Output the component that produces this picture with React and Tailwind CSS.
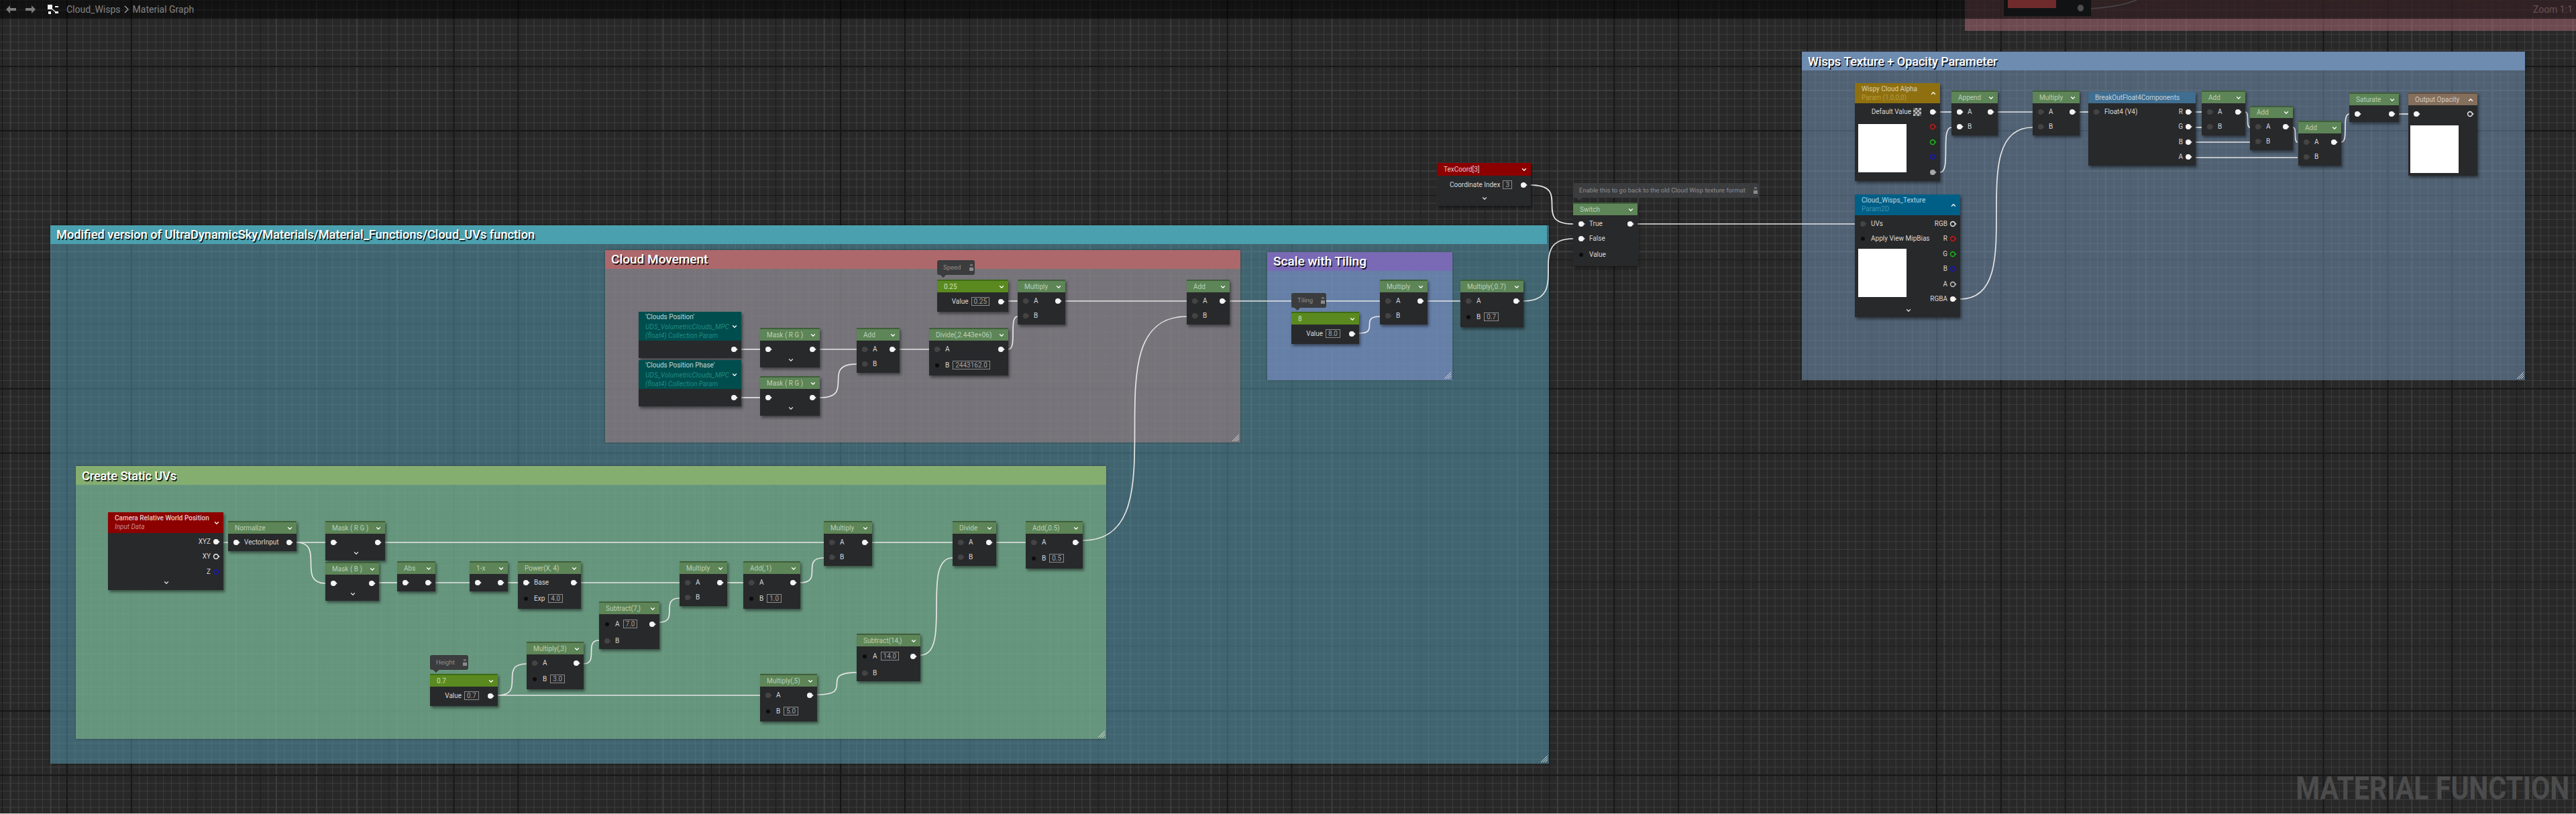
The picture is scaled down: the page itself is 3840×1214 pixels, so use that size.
import React from "react";
import { ChevronDown, ChevronUp } from "lucide-react";

const GREEN = "bg-[#5d8557] border-t-2 border-[#3f5e3a] text-[#bccfb5]";
const CONST = "bg-[#5a8a1f] border-t-2 border-[#3f6a14] text-[#cfe0b8]";
const RED = "bg-[#8c0000] text-[#e6c8c8]";
const TEAL = "bg-[#004d4d] text-[#c4d8d6]";
const GOLD = "bg-[#8f7010] text-[#d8ceb0]";
const BLUE = "bg-[#005f87] text-[#bcd6e2]";
const BREAK = "bg-[#3f6e91] text-[#c2d2dd]";
const BROWN = "bg-[#846e5c] border-t-2 border-[#5e4f42] text-[#d3cac2]";

const wires = [
  // cloud movement
  [1105, 521, 1133, 521],
  [1105, 593, 1133, 593],
  [1222, 521, 1277, 521],
  [1222, 593, 1277, 543],
  [1341, 521, 1385, 521],
  [1503, 521, 1517, 472],
  [1503, 449, 1517, 449],
  [1588, 449, 1769, 449],
  [1614, 806, 1769, 472],
  [1833, 449, 2057, 449],
  // scale with tiling
  [2026, 497, 2057, 472],
  [2128, 449, 2177, 449],
  [2271, 449, 2345, 356],
  [2282, 276, 2345, 334],
  [2441, 334, 2765, 334],
  // static uvs
  [333, 809, 340, 809],
  [442, 809, 485, 809],
  [442, 809, 485, 870],
  [574, 809, 1228, 809],
  [565, 869, 592, 869],
  [649, 869, 700, 869],
  [757, 869, 772, 869],
  [866, 869, 1013, 869],
  [1084, 869, 1108, 869],
  [1193, 869, 1228, 832],
  [1300, 809, 1420, 809],
  [1485, 809, 1529, 809],
  [742, 1037, 785, 990],
  [742, 1037, 1133, 1037],
  [870, 990, 893, 955],
  [983, 928, 1013, 892],
  [1218, 1036, 1277, 1003],
  [1372, 977, 1420, 832],
  // wisps
  [2892, 167, 2909, 167],
  [2892, 257, 2909, 190],
  [2978, 167, 3030, 167],
  [2922, 446, 3030, 190],
  [3100, 167, 3113, 167],
  [3273, 167, 3282, 167],
  [3273, 190, 3282, 190],
  [3273, 212, 3354, 212],
  [3273, 235, 3425, 235],
  [3347, 167, 3354, 190],
  [3418, 190, 3425, 212],
  [3490, 212, 3502, 170],
  [3576, 170, 3590, 170],
];

const Pin = ({ kind, color = "#e8e8e8" }) => {
  if (kind === "dot") {
    return (
      <svg width="11" height="10" className="shrink-0">
        <circle cx="5" cy="5" r="3" fill="#0c0c0c" />
      </svg>
    );
  }
  const fill = kind === "on" ? "#f4f4f4" : kind === "off" ? "#444444" : kind === "fill" ? color : "none";
  const stroke = kind === "ring" ? color : fill;
  return (
    <svg width="11" height="10" className="shrink-0">
      <path d="M8.5 3.2 L10.8 5 L8.5 6.8 Z" fill={kind === "ring" ? color : fill} />
      <circle cx="5" cy="5" r={kind === "ring" ? 3.4 : 4} fill={fill} stroke={stroke} strokeWidth={kind === "ring" ? 1.6 : 0} />
    </svg>
  );
};

const ValueBox = ({ children }) => (
  <span className="border border-[#8c8c8c] text-[#a2a2a2] px-[3px] h-[14px] leading-[12px] shrink-0">{children}</span>
);

const Checker = () => (
  <span className="w-[12px] h-[12px] mr-[12px] shrink-0 bg-[repeating-conic-gradient(#b5b5b5_0_25%,#5a5a5a_0_50%)] bg-[size:6px_6px]" />
);

const PinRow = ({ row }) => (
  <div className={`flex items-center ${row.h || "h-[22.5px]"}`}>
    {row.l && <Pin kind={row.l} />}
    {row.a && <span className="ml-[6px] text-[#d8d8d8] whitespace-nowrap">{row.a}</span>}
    {row.box && <span className="ml-[5px]"><ValueBox>{row.box}</ValueBox></span>}
    <div className="grow" />
    {row.ra && <span className="mr-[3px] text-[#d8d8d8] whitespace-nowrap">{row.ra}</span>}
    {row.rbox && <span className="mr-[12px] ml-[1px]"><ValueBox>{row.rbox}</ValueBox></span>}
    {row.check && <Checker />}
    {row.r && <Pin kind={row.r} color={row.c} />}
  </div>
);

const Node = ({ className, head = GREEN, title, sub, arrow = "down", rows = [], foot, thumb, headH = "h-[19px]", titleClass = "" }) => (
  <div className={`absolute flex flex-col bg-[#28292b] shadow-[2px_3px_4px_rgba(0,0,0,0.45)] text-[10px] leading-none ${className}`}>
    <div className={`flex items-center justify-between pl-[10px] pr-[5px] shrink-0 ${headH} ${head}`}>
      <div className="flex flex-col gap-[3px] min-w-0">
        <span className={`whitespace-nowrap ${titleClass}`}>{title}</span>
        {sub}
      </div>
      {arrow === "down" && <ChevronDown size={10} strokeWidth={3} className="text-white shrink-0" />}
      {arrow === "up" && <ChevronUp size={10} strokeWidth={3} className="text-white shrink-0" />}
    </div>
    <div className="relative flex flex-col grow pl-[7px] pr-[5px] pt-[1.5px]">
      {rows.map((row, i) => (
        <PinRow key={i} row={row} />
      ))}
      {foot && (
        <div className="mt-auto flex justify-center h-[16px] items-start">
          <ChevronDown size={10} strokeWidth={3} className="text-[#e0e0e0]" />
        </div>
      )}
    </div>
    {thumb && <div className={`absolute bg-white ${thumb}`} />}
  </div>
);

const Comment = ({ className, title, barColor, bodyColor, size = "text-[19px]" }) => (
  <div className={`absolute flex flex-col shadow-[0_0_3px_rgba(0,0,0,0.4)] ${bodyColor} ${className}`}>
    <div className={`h-[28px] shrink-0 flex items-center pl-[9px] text-white font-medium whitespace-nowrap [text-shadow:1.5px_1.5px_0_rgba(0,0,0,0.85)] ${size} ${barColor}`}>
      {title}
    </div>
    <svg width="12" height="12" className="absolute right-[1px] bottom-[1px]" stroke="#d8d8d8" strokeWidth="1">
      <path d="M1 11 L11 1 M4 11 L11 4 M7 11 L11 7" />
    </svg>
  </div>
);

const Bubble = ({ className, children }) => (
  <div className={`absolute flex items-center justify-between pl-[9px] pr-[2px] h-[22px] bg-[#3b3c3e] rounded-[3px] text-[#8e8e8e] text-[9.5px] whitespace-nowrap ${className}`}>
    <span>{children}</span>
    <span className="flex flex-col gap-[2px] items-center">
      <span className="w-[4px] h-[3px] bg-[#6c6c6c]" />
      <span className="w-[6px] h-[5px] bg-[#8a8a8a]" />
    </span>
    <span className="absolute left-[6px] -bottom-[3px] w-[6px] h-[6px] rotate-45 bg-[#3b3c3e]" />
  </div>
);

const Sub = ({ className, children }) => <span className={`whitespace-nowrap ${className}`}>{children}</span>;

const AB = [
  { l: "off", a: "A", r: "on" },
  { l: "off", a: "B" },
];
const ABox = (v) => [
  { l: "off", a: "A", r: "on" },
  { l: "dot", a: "B", box: v, h: "h-[26px]" },
];
const THROUGH = [{ l: "on", r: "on" }];

const App = () => {
  return (
    <div className="relative w-[3840px] h-[1214px] overflow-hidden [font-family:Roboto,sans-serif] bg-[#282828] bg-[repeating-linear-gradient(to_right,#161616_0_1.5px,transparent_1.5px_96.1px),repeating-linear-gradient(to_bottom,#161616_0_1.5px,transparent_1.5px_96.1px),repeating-linear-gradient(to_right,#3c3c3c_0_1.2px,transparent_1.2px_12.0125px),repeating-linear-gradient(to_bottom,#3c3c3c_0_1.2px,transparent_1.2px_12.0125px)] bg-[position:2.9px_2.2px]">
      {/* comment boxes */}
      <Comment className="left-[75px] top-[336px] w-[2234px] h-[803px]" size="text-[18.2px]" title="Modified version of UltraDynamicSky/Materials/Material_Functions/Cloud_UVs function" barColor="bg-[#4aa0ae] w-[2231px]" bodyColor="bg-[#5aa2b8]/50" />
      <Comment className="left-[902px] top-[373px] w-[947px] h-[287px]" title="Cloud Movement" barColor="bg-[#ad686b]" bodyColor="bg-[#9a7f81]/60" />
      <Comment className="left-[1889px] top-[376px] w-[276px] h-[191px]" title="Scale with Tiling" barColor="bg-[#7a6ab5]" bodyColor="bg-[#7f91cb]/60" />
      <Comment className="left-[113px] top-[695px] w-[1536px] h-[407px]" size="text-[18px]" title="Create Static UVs" barColor="bg-[#84ad70]" bodyColor="bg-[#7fb685]/60" />
      <Comment className="left-[2686px] top-[77px] w-[1078px] h-[490px]" size="text-[18px]" title="Wisps Texture + Opacity Parameter" barColor="bg-[#6e8bb0]" bodyColor="bg-[#789abe]/50" />
      <div className="absolute left-[2929px] -top-[40px] w-[911px] h-[86px] bg-[#b06c78]/50" />

      {/* wires */}
      <svg className="absolute inset-0 w-full h-full pointer-events-none" fill="none" stroke="#e6e6e6" strokeWidth="1.7">
        {wires.map(([x1, y1, x2, y2], i) => {
          const d = x2 - x1;
          return <path key={i} d={`M${x1} ${y1} C${x1 + d} ${y1} ${x2 - d} ${y2} ${x2} ${y2}`} />;
        })}
        <path d="M3110 13 C3140 12 3165 8 3185 0" stroke="#9a9a9a" />
      </svg>

      {/* cloud movement */}
      <Bubble className="left-[1397px] top-[388px] w-[56px]">Speed</Bubble>
      <Node className="left-[952px] top-[465px] w-[153px] h-[69px]" head={TEAL} headH="h-[43px]" title="'Clouds Position'" rows={[{ r: "on" }]} sub={<><Sub className="italic text-[#1f8a80] mt-[2px]">UDS_VolumetricClouds_MPC</Sub><Sub className="italic text-[#1f8a80]">(float4) Collection Param</Sub></>} />
      <Node className="left-[952px] top-[537px] w-[153px] h-[69px]" head={TEAL} headH="h-[43px]" title="'Clouds Position Phase'" rows={[{ r: "on" }]} sub={<><Sub className="italic text-[#1f8a80] mt-[2px]">UDS_VolumetricClouds_MPC</Sub><Sub className="italic text-[#1f8a80]">(float4) Collection Param</Sub></>} />
      <Node className="left-[1133px] top-[489px] w-[89px] h-[59px]" title="Mask ( R G )" rows={THROUGH} foot />
      <Node className="left-[1133px] top-[561px] w-[89px] h-[59px]" title="Mask ( R G )" rows={THROUGH} foot />
      <Node className="left-[1277px] top-[489px] w-[64px] h-[67px]" title="Add" rows={AB} />
      <Node className="left-[1385px] top-[489px] w-[118px] h-[71px]" title="Divide(,2.443e+06)" rows={ABox("2443162.0")} />
      <Node className="left-[1397px] top-[417px] w-[106px] h-[48px]" head={CONST} title="0.25" rows={[{ ra: "Value", rbox: "0.25", r: "on", h: "h-[25px]" }]} />
      <Node className="left-[1517px] top-[417px] w-[71px] h-[67px]" title="Multiply" rows={AB} />
      <Node className="left-[1769px] top-[417px] w-[64px] h-[67px]" title="Add" rows={AB} />

      {/* scale with tiling */}
      <Bubble className="left-[1925px] top-[437px] w-[52px]">Tiling</Bubble>
      <Node className="left-[1925px] top-[465px] w-[101px] h-[48px]" head={CONST} title="8" rows={[{ ra: "Value", rbox: "8.0", r: "on", h: "h-[25px]" }]} />
      <Node className="left-[2057px] top-[417px] w-[71px] h-[67px]" title="Multiply" rows={AB} />
      <Node className="left-[2177px] top-[417px] w-[94px] h-[71px]" title="Multiply(,0.7)" rows={ABox("0.7")} />
      <Node className="left-[2142px] top-[243px] w-[140px] h-[64px]" head={RED} title="TexCoord[3]" rows={[{ ra: "Coordinate Index", rbox: "3", r: "on", h: "h-[25px]" }]} foot />
      <Bubble className="left-[2345px] top-[273px] w-[277px]">Enable this to go back to the old Cloud Wisp texture format</Bubble>
      <Node className="left-[2345px] top-[302px] w-[96px] h-[95px]" title="Switch" rows={[{ l: "on", a: "True", r: "on" }, { l: "on", a: "False" }, { l: "dot", a: "Value", h: "h-[24px]" }]} />

      {/* static uvs */}
      <Node className="left-[161px] top-[764px] w-[172px] h-[116px]" head={RED} headH="h-[31px]" title="Camera Relative World Position" titleClass="font-medium" sub={<Sub className="italic text-[#c98a8a]">Input Data</Sub>} rows={[{ ra: "XYZ", r: "on" }, { ra: "XY", r: "ring", c: "#dddddd" }, { ra: "Z", r: "ring", c: "#1a1ab0" }]} foot />
      <Node className="left-[340px] top-[777px] w-[102px] h-[45px]" title="Normalize" rows={[{ l: "on", a: "VectorInput", r: "on" }]} />
      <Node className="left-[485px] top-[777px] w-[89px] h-[59px]" title="Mask ( R G )" rows={THROUGH} foot />
      <Node className="left-[485px] top-[838px] w-[80px] h-[58px]" title="Mask ( B )" rows={THROUGH} foot />
      <Node className="left-[592px] top-[837px] w-[57px] h-[45px]" title="Abs" rows={THROUGH} />
      <Node className="left-[700px] top-[837px] w-[57px] h-[45px]" title="1-x" rows={THROUGH} />
      <Node className="left-[772px] top-[837px] w-[94px] h-[71px]" title="Power(X, 4)" rows={[{ l: "on", a: "Base", r: "on" }, { l: "dot", a: "Exp", box: "4.0", h: "h-[26px]" }]} />
      <Bubble className="left-[641px] top-[977px] w-[57px]">Height</Bubble>
      <Node className="left-[641px] top-[1005px] w-[101px] h-[48px]" head={CONST} title="0.7" rows={[{ ra: "Value", rbox: "0.7", r: "on", h: "h-[25px]" }]} />
      <Node className="left-[785px] top-[957px] w-[85px] h-[71px]" title="Multiply(,3)" rows={ABox("3.0")} />
      <Node className="left-[893px] top-[897px] w-[90px] h-[71px]" title="Subtract(7,)" rows={[{ l: "dot", a: "A", box: "7.0", r: "on", h: "h-[27px]" }, { l: "off", a: "B" }]} />
      <Node className="left-[1013px] top-[837px] w-[71px] h-[67px]" title="Multiply" rows={AB} />
      <Node className="left-[1108px] top-[837px] w-[85px] h-[71px]" title="Add(,1)" rows={ABox("1.0")} />
      <Node className="left-[1133px] top-[1005px] w-[85px] h-[71px]" title="Multiply(,5)" rows={ABox("5.0")} />
      <Node className="left-[1228px] top-[777px] w-[72px] h-[67px]" title="Multiply" rows={AB} />
      <Node className="left-[1277px] top-[945px] w-[95px] h-[71px]" title="Subtract(14,)" rows={[{ l: "dot", a: "A", box: "14.0", r: "on", h: "h-[27px]" }, { l: "off", a: "B" }]} />
      <Node className="left-[1420px] top-[777px] w-[65px] h-[67px]" title="Divide" rows={AB} />
      <Node className="left-[1529px] top-[777px] w-[85px] h-[71px]" title="Add(,0.5)" rows={ABox("0.5")} />

      {/* wisps */}
      <Node className="left-[2765px] top-[124px] w-[127px] h-[146px]" head={GOLD} headH="h-[30px]" arrow="up" title="Wispy Cloud Alpha" sub={<Sub className="text-[#b89a3c]">Param (1,0,0,0)</Sub>} rows={[{ ra: "Default Value", check: true, r: "on" }, { r: "ring", c: "#c01818" }, { r: "ring", c: "#18b018" }, { r: "ring", c: "#1818b0" }, { r: "fill", c: "#a8a8a8" }]} thumb="left-[5px] top-[61px] w-[72px] h-[72px]" />
      <Node className="left-[2909px] top-[135px] w-[69px] h-[67px]" title="Append" rows={[{ l: "on", a: "A", r: "on" }, { l: "on", a: "B" }]} />
      <Node className="left-[3030px] top-[135px] w-[70px] h-[67px]" title="Multiply" rows={AB} />
      <Node className="left-[3113px] top-[137px] w-[160px] h-[110px]" head={BREAK} headH="h-[17px]" arrow="none" title="BreakOutFloat4Components" rows={[{ l: "off", a: "Float4 (V4)", ra: "R", r: "on" }, { ra: "G", r: "on" }, { ra: "B", r: "on" }, { ra: "A", r: "on" }]} />
      <Node className="left-[3282px] top-[135px] w-[65px] h-[67px]" title="Add" rows={AB} />
      <Node className="left-[3354px] top-[158px] w-[64px] h-[66px]" headH="h-[18px]" title="Add" rows={AB} />
      <Node className="left-[3426px] top-[180px] w-[64px] h-[67px]" title="Add" rows={AB} />
      <Node className="left-[3502px] top-[138px] w-[74px] h-[44px]" title="Saturate" rows={THROUGH} />
      <Node className="left-[3590px] top-[138px] w-[103px] h-[124px]" head={BROWN} arrow="up" title="Output Opacity" rows={[{ l: "on", r: "ring", c: "#dddddd" }]} thumb="left-[3px] top-[49px] w-[72px] h-[71px]" />
      <Node className="left-[2765px] top-[290px] w-[157px] h-[183px]" head={BLUE} headH="h-[31px]" arrow="up" title="Cloud_Wisps_Texture" sub={<Sub className="text-[#3c93b6]">Param2D</Sub>} rows={[{ l: "off", a: "UVs", ra: "RGB", r: "ring", c: "#dddddd" }, { l: "dot", a: "Apply View MipBias", ra: "R", r: "ring", c: "#c01818" }, { ra: "G", r: "ring", c: "#18b018" }, { ra: "B", r: "ring", c: "#1818b0" }, { ra: "A", r: "ring", c: "#b8b8b8" }, { ra: "RGBA", r: "on" }]} thumb="left-[5px] top-[81px] w-[72px] h-[72px]" foot />

      {/* node poking in at the top right */}
      <div className="absolute left-[2987px] -top-[40px] w-[130px] h-[64px] flex items-end bg-[#26282a]">
        <div className="ml-[6px] mb-[12px] w-[72px] h-[30px] bg-[#f55f5f]" />
        <div className="ml-auto mr-[11px] mb-[7px] w-[9px] h-[10px] rounded-full bg-[#aaaaaa]" />
      </div>

      {/* breadcrumb bar */}
      <div className="absolute left-0 right-0 top-0 h-[28px] bg-black/55 flex items-center text-[14px] text-[#828282]">
        <svg width="15" height="12" viewBox="0 0 15 12" className="ml-[9px]" fill="#7c7c7c">
          <path d="M0 6 L6 0 V4 H15 V8 H6 V12 Z" />
        </svg>
        <svg width="15" height="12" viewBox="0 0 15 12" className="ml-[14px]" fill="#7c7c7c">
          <path d="M15 6 L9 0 V4 H0 V8 H9 V12 Z" />
        </svg>
        <svg width="16" height="14" viewBox="0 0 16 14" className="ml-[18px]" fill="#f0f0f0">
          <rect x="0" y="0" width="7" height="7" />
          <rect x="11" y="2" width="5" height="2" />
          <rect x="1" y="10" width="4" height="4" />
          <rect x="11" y="10" width="5" height="3" />
          <path d="M6 6 L12 11" stroke="#f0f0f0" strokeWidth="1.2" />
        </svg>
        <span className="ml-[12px]">Cloud_Wisps</span>
        <svg width="8" height="12" viewBox="0 0 8 12" className="ml-[5px]" fill="none" stroke="#a0a0a0" strokeWidth="1.4">
          <path d="M1 1 L6 6 L1 11" />
        </svg>
        <span className="ml-[5px]">Material Graph</span>
        <span className="ml-auto mr-[5px] text-[#6a5054]">Zoom 1:1</span>
      </div>

      <div className="absolute right-[10px] bottom-[14px] text-[48px] leading-none font-bold text-[#4c4c4c] origin-right scale-x-[0.855] whitespace-nowrap">MATERIAL FUNCTION</div>
      <div className="absolute left-0 right-0 bottom-0 h-[1px] bg-[#c8c8c8]" />
    </div>
  );
};

export default App;
